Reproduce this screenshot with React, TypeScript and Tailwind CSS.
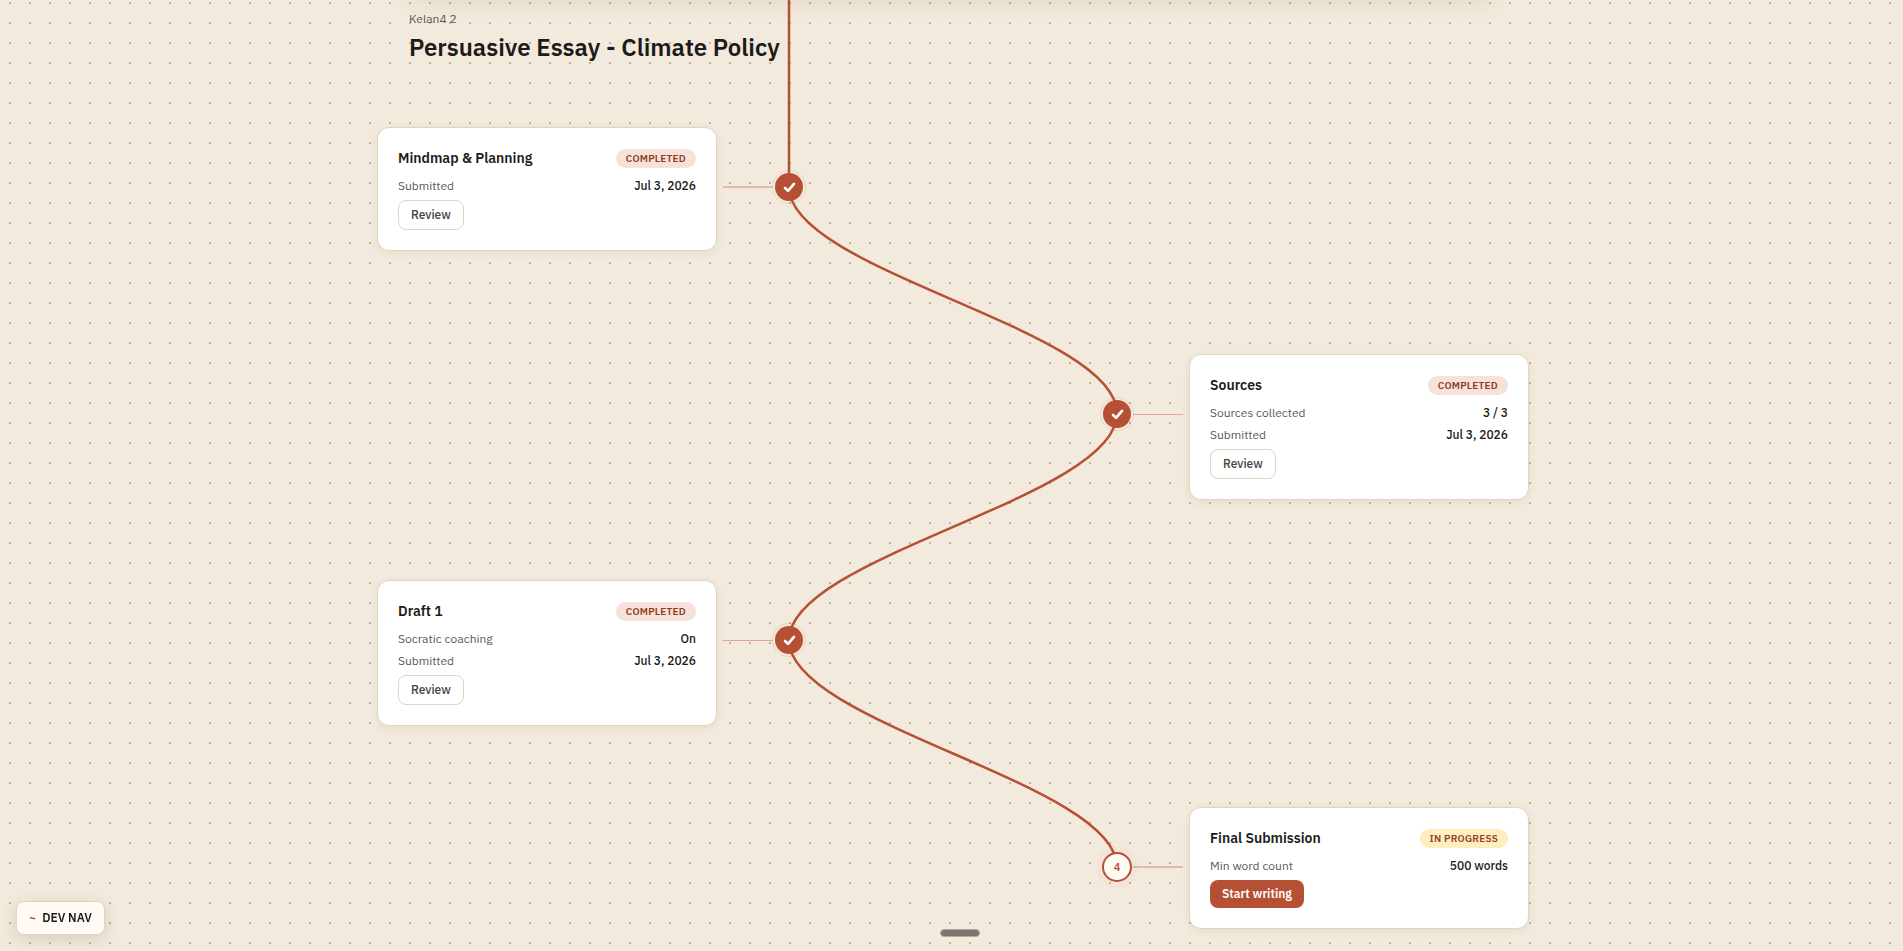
import clsx from 'clsx'

type Status = 'completed' | 'in-progress'

interface Stage {
  id: number
  title: string
  status: Status
  details: { label: string; value: string }[]
}

const stages: Stage[] = [
  {
    id: 1,
    title: 'Mindmap & Planning',
    status: 'completed',
    details: [{ label: 'Submitted', value: 'Jul 3, 2026' }],
  },
  {
    id: 2,
    title: 'Sources',
    status: 'completed',
    details: [
      { label: 'Sources collected', value: '3 / 3' },
      { label: 'Submitted', value: 'Jul 3, 2026' },
    ],
  },
  {
    id: 3,
    title: 'Draft 1',
    status: 'completed',
    details: [
      { label: 'Socratic coaching', value: 'On' },
      { label: 'Submitted', value: 'Jul 3, 2026' },
    ],
  },
  {
    id: 4,
    title: 'Final Submission',
    status: 'in-progress',
    details: [{ label: 'Min word count', value: '500 words' }],
  },
]

function StatusBadge({ status }: { status: Status }) {
  return (
    <span
      className={clsx(
        'flex h-[19px] items-center rounded-full px-[10px] font-semibold text-[10px] uppercase tracking-wide',
        status === 'completed'
          ? 'bg-[#f6e2d9] text-[#8c3a25]'
          : 'bg-[#feeec0] text-[#96402a]',
      )}
    >
      {status === 'completed' ? 'Completed' : 'In progress'}
    </span>
  )
}

function StageCard({ stage }: { stage: Stage }) {
  return (
    <article className="w-[340px] rounded-xl border border-[#e0d5c3] bg-white p-5 shadow-[0_2px_8px_rgba(80,60,30,0.08)]">
      <div className="mb-2 flex h-5 items-center justify-between">
        <h2 className="font-semibold text-[#1c1b1a] text-[14px]">
          {stage.title}
        </h2>
        <StatusBadge status={stage.status} />
      </div>
      <dl className="mb-1 flex flex-col gap-[2px]">
        {stage.details.map((detail) => (
          <div
            className="flex justify-between text-[12px] leading-5"
            key={detail.label}
          >
            <dt className="text-[#5c5954]">{detail.label}</dt>
            <dd className="font-medium text-[#1c1b1a]">{detail.value}</dd>
          </div>
        ))}
      </dl>
      {stage.status === 'completed' ? (
        <button
          className="flex h-[30px] items-center rounded-lg border border-[#e0d5c3] bg-white px-3 font-medium text-[#45423e] text-[12px]"
          type="button"
        >
          Review
        </button>
      ) : (
        <button
          className="flex h-7 items-center rounded-lg bg-[#b65034] px-3 font-semibold text-[12px] text-white"
          type="button"
        >
          Start writing
        </button>
      )}
    </article>
  )
}

function StageNode({ stage }: { stage: Stage }) {
  if (stage.status === 'in-progress') {
    return (
      <span className="flex size-[30px] items-center justify-center rounded-full border-2 border-[#b65034] bg-[#fffaf3] font-semibold text-[#b65034] text-[11px] shadow-[0_0_0_6px_rgba(182,80,52,0.03)]">
        {stage.id}
      </span>
    )
  }

  return (
    <span className="flex size-7 items-center justify-center rounded-full bg-[#b65034] outline-1 outline-[#b65034]/15 outline-offset-2">
      <svg
        aria-label="Completed"
        className="size-7"
        fill="none"
        role="img"
        stroke="#fff"
        strokeLinecap="round"
        strokeLinejoin="round"
        strokeWidth="2.6"
        viewBox="0 0 28 28"
      >
        <path d="M10 15 L13 17.8 L19 10.8" />
      </svg>
    </span>
  )
}

function StageRow({ stage, index }: { stage: Stage; index: number }) {
  return (
    <li
      className={clsx(
        'flex items-start gap-[6px]',
        index % 2 === 1 && 'flex-row-reverse',
      )}
    >
      <StageCard stage={stage} />
      <div
        className={clsx(
          'flex h-[120px] items-center',
          index % 2 === 1 && 'flex-row-reverse',
        )}
      >
        <div
          className={clsx(
            'w-[50px]',
            index % 3 === 0 ? 'h-[2px] bg-[#e2bba8]' : 'h-px bg-[#dba995]',
          )}
        />
        <div className="flex w-8 justify-center">
          <StageNode stage={stage} />
        </div>
      </div>
    </li>
  )
}

export default function App() {
  return (
    <div className="min-h-screen overflow-hidden bg-[#f2eadc] bg-[radial-gradient(circle,#c2b59b_1px,transparent_1px)] bg-[length:20px_20px] bg-[position:0_-7px] font-['IBM_Plex_Sans',Roboto,sans-serif]">
      {/* toolbar scrolled out of view, only its shadow reaches the canvas */}
      <div className="mx-auto -mt-14 h-14 max-w-[1088px] rounded-xl shadow-[0_4px_24px_rgba(60,40,20,0.08)]" />
      <main className="relative mx-auto w-full max-w-[1155px] pl-[3px]">
        <svg
          aria-hidden="true"
          className="absolute top-0 left-[3px] h-[951px] w-[1152px]"
          fill="none"
          viewBox="0 0 1152 951"
        >
          <path
            d="M412 0 V187 C412 271 740 329 740 413.5 C740 498 412 556 412 640 C412 724 740 783 740 867"
            stroke="#b65034"
            strokeWidth="2.5"
          />
        </svg>
        <header className="relative h-[127px] px-8 pt-[9px]">
          <p className="text-[#5c5954] text-[12px] leading-5">Kelan4 2</p>
          <h1 className="mt-[2px] font-semibold text-[#1c1b1a] text-[24px] leading-8">
            Persuasive Essay - Climate Policy
          </h1>
        </header>
        <ol className="relative grid grid-rows-[227px_226px_227px_auto]">
          {stages.map((stage, index) => (
            <StageRow index={index} key={stage.id} stage={stage} />
          ))}
        </ol>
      </main>
      <button
        className="fixed bottom-4 left-4 flex h-[34px] items-center gap-[6px] rounded-lg border border-[#e0d5c3] bg-[#fffaf3] px-3 font-semibold text-[#1c1b1a] text-[12px] shadow-[0_4px_16px_rgba(60,40,20,0.15)]"
        type="button"
      >
        <span className="text-[#b65034]">~</span>
        DEV NAV
      </button>
      <div className="fixed bottom-[14px] left-1/2 -ml-3 h-2 w-10 rounded-full border border-[#b3aca1] bg-[#7b766f]" />
    </div>
  )
}
